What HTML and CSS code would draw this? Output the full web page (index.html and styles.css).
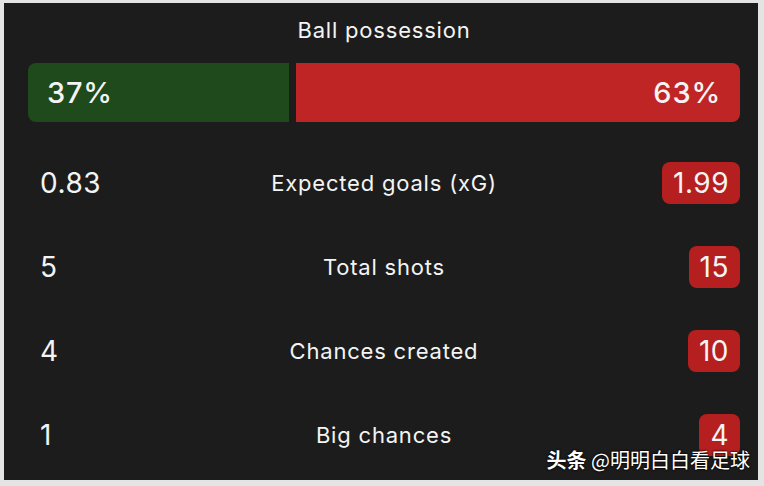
FILE: index.html
```html
<!DOCTYPE html>
<html>
<head>
<meta charset="utf-8">
<link rel="stylesheet" href="styles.css">
</head>
<body>
<div class="panel">
  <div class="title">Ball possession</div>
  <div class="bar">
    <div class="seg home" style="width:37%">37%</div>
    <div class="seg away" style="width:63%">63%</div>
  </div>
  <div class="row">
    <div class="lv">0.83</div>
    <div class="label">Expected goals (xG)</div>
    <div class="rv"><span class="badge">1.99</span></div>
  </div>
  <div class="row">
    <div class="lv">5</div>
    <div class="label">Total shots</div>
    <div class="rv"><span class="badge">15</span></div>
  </div>
  <div class="row">
    <div class="lv">4</div>
    <div class="label">Chances created</div>
    <div class="rv"><span class="badge">10</span></div>
  </div>
  <div class="row">
    <div class="lv">1</div>
    <div class="label">Big chances</div>
    <div class="rv"><span class="badge">4</span></div>
  </div>
  <div class="watermark"><b>头条</b> @明明白白看足球</div>
</div>
</body>
</html>
```
FILE: styles.css
```css
html, body {
  margin: 0;
  padding: 0;
}
body {
  background: #e4e4e4;
  width: 764px;
  height: 486px;
  overflow: hidden;
  font-family: "Inter", "Liberation Sans", "Noto Sans CJK SC", sans-serif;
  color: #f4f4f4;
}
.panel {
  position: relative;
  margin: 3px 6px 0 4px;
  height: 477px;
  background: #1c1c1c;
  box-sizing: border-box;
  padding: 14px 18px 0 24px;
  display: flex;
  flex-direction: column;
}
.title {
  text-align: center;
  font-size: 22px;
  letter-spacing: 0.8px;
  line-height: 26px;
  height: 26px;
  margin-bottom: 20px;
}
.bar {
  display: flex;
  gap: 7px;
  height: 59px;
  margin-bottom: 19px;
}
.seg {
  display: flex;
  align-items: center;
  font-size: 29px;
  letter-spacing: 0.8px;
  font-weight: 500;
  box-sizing: border-box;
}
.home {
  background: #1f4a1c;
  border-radius: 8px 0 0 8px;
  padding-left: 19px;
}
.away {
  background: #c02525;
  border-radius: 0 8px 8px 0;
  justify-content: flex-end;
  padding-right: 19px;
}
.row {
  display: grid;
  grid-template-columns: 1fr auto 1fr;
  align-items: center;
  height: 84px;
}
.lv {
  font-size: 28px;
  letter-spacing: 0.5px;
  padding-left: 12px;
}
.label {
  font-size: 22px;
  letter-spacing: 0.8px;
  text-align: center;
}
.rv {
  display: flex;
  justify-content: flex-end;
}
.badge {
  background: #b51f1f;
  border-radius: 8px;
  font-size: 28px;
  letter-spacing: 0.5px;
  height: 42px;
  line-height: 42px;
  padding: 0 11px;
  text-align: center;
}
.watermark {
  position: absolute;
  right: 8px;
  bottom: 6px;
  font-size: 20px;
  font-family: "Noto Sans CJK SC", sans-serif;
  color: #ffffff;
  text-shadow: 0 0 2px #000, 0 0 2px #000;
}
.watermark b {
  font-weight: 700;
}
```
